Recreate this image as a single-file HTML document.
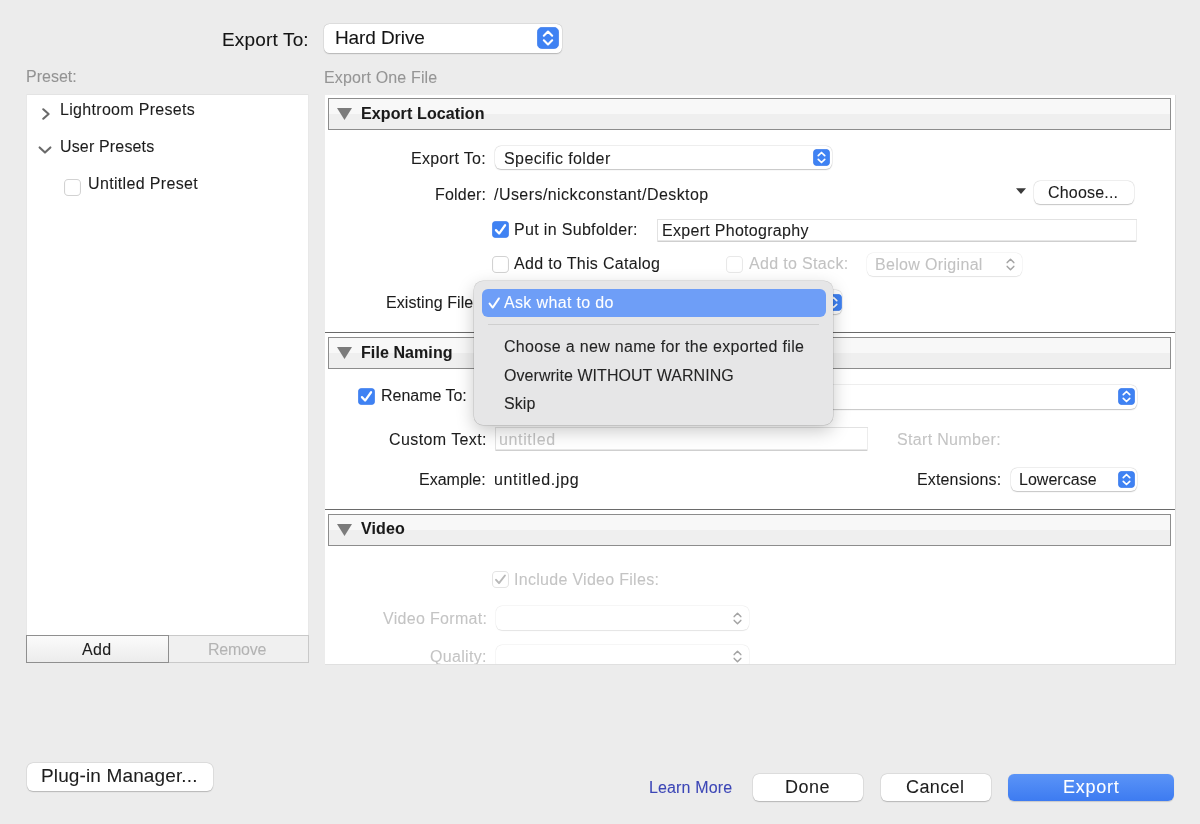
<!DOCTYPE html>
<html><head><meta charset="utf-8"><style>
html,body{margin:0;padding:0}
body{width:1200px;height:824px;background:#ececec;position:relative;overflow:hidden;font-family:"Liberation Sans",sans-serif}
.a,.t,.pop{position:absolute}
.t{white-space:pre;will-change:transform;-webkit-text-stroke:0.08px currentColor}
.pop{background:#fff;box-shadow:0 0 0 0.5px rgba(0,0,0,0.08),0 0.8px 1.2px rgba(0,0,0,0.20)}
.hdr{position:absolute;border:1px solid #8c8c8c;background:linear-gradient(#f8f8f8 0,#f8f8f8 50%,#efefef 50%,#efefef 100%)}
.tf{background:#fff;box-shadow:inset 1px 1px 0 #e2e2e2, inset -1px 0 0 #ececec, inset 0 -1.5px 0 #cfcfcf}
.menu{background:#e6e6e7;border-radius:9px;box-shadow:0 0 0 0.5px rgba(0,0,0,0.18),0 6px 18px rgba(0,0,0,0.22)}
</style></head><body>
<div class="t" style="left:222.25px;top:29.50px;font-size:19px;line-height:19px;color:#141414;letter-spacing:0.161px;">Export To:</div>
<div class="pop" style="left:323.5px;top:23.5px;width:238.5px;height:29.5px;border-radius:5.5px;"></div>
<div class="t" style="left:335.25px;top:27.70px;font-size:19px;line-height:19px;color:#141414;letter-spacing:-0.106px;">Hard Drive</div>
<svg class="a" style="left:537px;top:27px" width="22" height="22" viewBox="0 0 22 22"><rect x="0.25" y="0.25" width="21.5" height="21.5" rx="5" fill="#3f82f3" stroke="#3170e6" stroke-width="0.5"/><path d="M6.82 8.69 L11.00 4.51 L15.18 8.69 M6.82 13.31 L11.00 17.49 L15.18 13.31" stroke="#fff" stroke-width="2.09" fill="none" stroke-linecap="round" stroke-linejoin="round"/></svg>
<div class="t" style="left:25.85px;top:69.20px;font-size:16px;line-height:16px;color:#939393;letter-spacing:0.008px;">Preset:</div>
<div class="t" style="left:323.95px;top:69.50px;font-size:16px;line-height:16px;color:#959595;letter-spacing:0.146px;">Export One File</div>
<div class="a" style="left:27px;top:95px;width:281px;height:540px;background:#fff;box-shadow:0 -0.5px 0 0.5px #e3e3e3"></div>
<svg class="a" style="left:41px;top:108px" width="10" height="12" viewBox="0 0 10 12"><path d="M2.3 1.3 L7.6 6 L2.3 10.7" stroke="#6a6a6a" stroke-width="2.1" fill="none" stroke-linecap="round" stroke-linejoin="round"/></svg>
<svg class="a" style="left:38px;top:145px" width="14" height="10" viewBox="0 0 14 10"><path d="M1.6 2.4 L7 7.6 L12.4 2.4" stroke="#6a6a6a" stroke-width="2.1" fill="none" stroke-linecap="round" stroke-linejoin="round"/></svg>
<div class="t" style="left:60.00px;top:102.00px;font-size:16px;line-height:16px;color:#1c1c1c;letter-spacing:0.312px;">Lightroom Presets</div>
<div class="t" style="left:59.75px;top:139.00px;font-size:16px;line-height:16px;color:#1c1c1c;letter-spacing:0.159px;">User Presets</div>
<svg class="a" style="left:64px;top:179px" width="17" height="17" viewBox="0 0 16 16"><rect x="0.5" y="0.5" width="15" height="15" rx="3.5" fill="#fff" stroke="#d2d2d2" stroke-width="1"/></svg>
<div class="t" style="left:88.00px;top:176.00px;font-size:16px;line-height:16px;color:#1c1c1c;letter-spacing:0.339px;">Untitled Preset</div>
<div class="a btn2" style="left:26px;top:635px;width:141px;height:26px;border:1px solid #8f8f8f;background:linear-gradient(#fbfbfb,#ececec)"></div>
<div class="a btn2" style="left:169px;top:635px;width:139px;height:26px;border:1px solid #c9c9c9;border-left:none;background:#f0f0f0"></div>
<div class="t" style="left:82.25px;top:641.70px;font-size:16px;line-height:16px;color:#1c1c1c;letter-spacing:0.375px;">Add</div>
<div class="t" style="left:208.25px;top:641.70px;font-size:16px;line-height:16px;color:#b3b3b3;letter-spacing:-0.250px;">Remove</div>
<div class="a" style="left:325px;top:95px;width:850px;height:569px;background:#fff;box-shadow:0.5px 0.5px 0 0.5px #dcdcdc" id="rp"></div>
<div class="hdr" style="left:328px;top:98px;width:841px;height:30px;"></div>
<svg class="a" style="left:337px;top:108px" width="15" height="12" viewBox="0 0 15 12"><path d="M0 0 L15 0 L7.5 12 Z" fill="#7b7b7b"/></svg>
<div class="t" style="left:360.95px;top:106.20px;font-size:16px;line-height:16px;font-weight:bold;color:#1a1a1a;letter-spacing:0.125px;">Export Location</div>
<div class="t" style="left:411.25px;top:150.75px;font-size:16px;line-height:16px;color:#1c1c1c;letter-spacing:0.333px;">Export To:</div>
<div class="pop" style="left:495px;top:145.5px;width:337px;height:23.5px;border-radius:6px;"></div>
<div class="t" style="left:504.25px;top:150.75px;font-size:16px;line-height:16px;color:#1c1c1c;letter-spacing:0.411px;">Specific folder</div>
<svg class="a" style="left:812.5px;top:149px" width="17" height="17" viewBox="0 0 17 17"><rect x="0.25" y="0.25" width="16.5" height="16.5" rx="4" fill="#3f82f3" stroke="#3170e6" stroke-width="0.5"/><path d="M5.27 6.71 L8.50 3.48 L11.73 6.71 M5.27 10.29 L8.50 13.52 L11.73 10.29" stroke="#fff" stroke-width="1.70" fill="none" stroke-linecap="round" stroke-linejoin="round"/></svg>
<div class="t" style="left:434.75px;top:186.50px;font-size:16px;line-height:16px;color:#1c1c1c;letter-spacing:0.208px;">Folder:</div>
<div class="t" style="left:493.50px;top:186.50px;font-size:16px;line-height:16px;color:#1c1c1c;letter-spacing:0.442px;">/Users/nickconstant/Desktop</div>
<svg class="a" style="left:1015.5px;top:187.5px" width="10" height="6" viewBox="0 0 10 6"><path d="M0 0.2 L10 0.2 L5 6 Z" fill="#3a3a3a"/></svg>
<div class="pop" style="left:1034px;top:181px;width:100px;height:23px;border-radius:6px;"></div>
<div class="t" style="left:1048.00px;top:185.00px;font-size:16px;line-height:16px;color:#1c1c1c;letter-spacing:0.188px;">Choose...</div>
<svg class="a" style="left:491.5px;top:221px" width="17" height="17" viewBox="0 0 16 16"><rect x="0.2" y="0.2" width="15.6" height="15.6" rx="3.5" fill="#3f82f3" stroke="#3472e6" stroke-width="0.4"/><path d="M3.7 8.6 L6.7 11.8 L12.3 4.0" stroke="#fff" stroke-width="2.1" fill="none" stroke-linecap="round" stroke-linejoin="round"/></svg>
<div class="t" style="left:514.25px;top:222.00px;font-size:16px;line-height:16px;color:#1c1c1c;letter-spacing:0.328px;">Put in Subfolder:</div>
<div class="a tf" style="left:657px;top:219px;width:480px;height:23px"></div>
<div class="t" style="left:661.75px;top:222.50px;font-size:16px;line-height:16px;color:#1c1c1c;letter-spacing:0.294px;">Expert Photography</div>
<svg class="a" style="left:491.5px;top:255.5px" width="17" height="17" viewBox="0 0 16 16"><rect x="0.5" y="0.5" width="15" height="15" rx="3.5" fill="#fff" stroke="#d2d2d2" stroke-width="1"/></svg>
<div class="t" style="left:514.25px;top:255.75px;font-size:16px;line-height:16px;color:#1c1c1c;letter-spacing:0.319px;">Add to This Catalog</div>
<svg class="a" style="left:725.5px;top:255.5px" width="17" height="17" viewBox="0 0 16 16"><rect x="0.5" y="0.5" width="15" height="15" rx="3.5" fill="#fff" stroke="#e8e8e8" stroke-width="1"/></svg>
<div class="t" style="left:748.50px;top:255.75px;font-size:16px;line-height:16px;color:#c2c2c2;letter-spacing:0.333px;">Add to Stack:</div>
<div class="pop" style="left:867px;top:252.5px;width:155px;height:23.5px;border-radius:6px;box-shadow:0 0 0 0.5px rgba(0,0,0,0.06),0 0.5px 1px rgba(0,0,0,0.08)"></div>
<div class="t" style="left:875.25px;top:256.50px;font-size:16px;line-height:16px;color:#c2c2c2;letter-spacing:0.327px;">Below Original</div>
<svg class="a" style="left:1006px;top:258px" width="9" height="13" viewBox="0 0 9 13"><path d="M1.2 4.6 L4.5 1.2 L7.8 4.6 M1.2 8.4 L4.5 11.8 L7.8 8.4" stroke="#a4a4a4" stroke-width="1.5" fill="none" stroke-linecap="round" stroke-linejoin="round"/></svg>
<div class="t" style="left:385.50px;top:295.00px;font-size:16px;line-height:16px;color:#1c1c1c;letter-spacing:0.083px;">Existing File</div>
<div class="pop" style="left:495px;top:290px;width:347px;height:24px;border-radius:6px;"></div>
<svg class="a" style="left:825px;top:294px" width="17" height="17" viewBox="0 0 17 17"><rect x="0.25" y="0.25" width="16.5" height="16.5" rx="4" fill="#3f82f3" stroke="#3170e6" stroke-width="0.5"/><path d="M5.27 6.71 L8.50 3.48 L11.73 6.71 M5.27 10.29 L8.50 13.52 L11.73 10.29" stroke="#fff" stroke-width="1.70" fill="none" stroke-linecap="round" stroke-linejoin="round"/></svg>
<div class="a" style="left:325px;top:332px;width:850px;height:1px;background:#6a6a6a"></div>
<div class="hdr" style="left:328px;top:337px;width:841px;height:30px;"></div>
<svg class="a" style="left:337px;top:347px" width="15" height="12" viewBox="0 0 15 12"><path d="M0 0 L15 0 L7.5 12 Z" fill="#7b7b7b"/></svg>
<div class="t" style="left:360.85px;top:344.70px;font-size:16px;line-height:16px;font-weight:bold;color:#1a1a1a;letter-spacing:0.085px;">File Naming</div>
<svg class="a" style="left:358px;top:387.5px" width="17" height="17" viewBox="0 0 16 16"><rect x="0.2" y="0.2" width="15.6" height="15.6" rx="3.5" fill="#3f82f3" stroke="#3472e6" stroke-width="0.4"/><path d="M3.7 8.6 L6.7 11.8 L12.3 4.0" stroke="#fff" stroke-width="2.1" fill="none" stroke-linecap="round" stroke-linejoin="round"/></svg>
<div class="t" style="left:380.50px;top:388.25px;font-size:16px;line-height:16px;color:#1c1c1c;letter-spacing:-0.028px;">Rename To:</div>
<div class="pop" style="left:495px;top:384.5px;width:642px;height:24px;border-radius:6px;"></div>
<svg class="a" style="left:1118px;top:388px" width="17" height="17" viewBox="0 0 17 17"><rect x="0.25" y="0.25" width="16.5" height="16.5" rx="4" fill="#3f82f3" stroke="#3170e6" stroke-width="0.5"/><path d="M5.27 6.71 L8.50 3.48 L11.73 6.71 M5.27 10.29 L8.50 13.52 L11.73 10.29" stroke="#fff" stroke-width="1.70" fill="none" stroke-linecap="round" stroke-linejoin="round"/></svg>
<div class="t" style="left:388.75px;top:431.50px;font-size:16px;line-height:16px;color:#1c1c1c;letter-spacing:0.409px;">Custom Text:</div>
<div class="a tf" style="left:495px;top:427px;width:373px;height:24px"></div>
<div class="t" style="left:499.25px;top:431.50px;font-size:16px;line-height:16px;color:#c4c4c4;letter-spacing:0.643px;">untitled</div>
<div class="t" style="left:897.25px;top:431.50px;font-size:16px;line-height:16px;color:#c4c4c4;letter-spacing:0.333px;">Start Number:</div>
<div class="t" style="left:419.25px;top:471.50px;font-size:16px;line-height:16px;color:#1c1c1c;letter-spacing:0.000px;">Example:</div>
<div class="t" style="left:493.75px;top:471.50px;font-size:16px;line-height:16px;color:#1c1c1c;letter-spacing:0.659px;">untitled.jpg</div>
<div class="t" style="left:916.75px;top:471.50px;font-size:16px;line-height:16px;color:#1c1c1c;letter-spacing:0.150px;">Extensions:</div>
<div class="pop" style="left:1011px;top:467.5px;width:126px;height:23px;border-radius:6px;"></div>
<div class="t" style="left:1019.25px;top:471.50px;font-size:16px;line-height:16px;color:#1c1c1c;letter-spacing:0.031px;">Lowercase</div>
<svg class="a" style="left:1118px;top:471px" width="17" height="17" viewBox="0 0 17 17"><rect x="0.25" y="0.25" width="16.5" height="16.5" rx="4" fill="#3f82f3" stroke="#3170e6" stroke-width="0.5"/><path d="M5.27 6.71 L8.50 3.48 L11.73 6.71 M5.27 10.29 L8.50 13.52 L11.73 10.29" stroke="#fff" stroke-width="1.70" fill="none" stroke-linecap="round" stroke-linejoin="round"/></svg>
<div class="a" style="left:325px;top:508.5px;width:850px;height:1px;background:#6a6a6a"></div>
<div class="hdr" style="left:328px;top:513.5px;width:841px;height:30px;"></div>
<svg class="a" style="left:337px;top:523.5px" width="15" height="12" viewBox="0 0 15 12"><path d="M0 0 L15 0 L7.5 12 Z" fill="#7b7b7b"/></svg>
<div class="t" style="left:360.50px;top:521.25px;font-size:16px;line-height:16px;font-weight:bold;color:#1a1a1a;letter-spacing:0.125px;">Video</div>
<svg class="a" style="left:491.5px;top:571px" width="17" height="17" viewBox="0 0 16 16"><rect x="0.5" y="0.5" width="15" height="15" rx="3.5" fill="#fff" stroke="#e4e4e4" stroke-width="1"/><path d="M3.8 8.3 L6.6 11.4 L12.2 4.2" stroke="#b8b8b8" stroke-width="1.8" fill="none" stroke-linecap="round" stroke-linejoin="round"/></svg>
<div class="t" style="left:513.75px;top:572.00px;font-size:16px;line-height:16px;color:#c4c4c4;letter-spacing:0.292px;">Include Video Files:</div>
<div class="t" style="left:382.50px;top:610.75px;font-size:16px;line-height:16px;color:#c4c4c4;letter-spacing:0.312px;">Video Format:</div>
<div class="pop" style="left:495.5px;top:606px;width:253.5px;height:24px;border-radius:6px;box-shadow:0 0 0 0.5px rgba(0,0,0,0.06),0 0.5px 1px rgba(0,0,0,0.08)"></div>
<svg class="a" style="left:733px;top:612px" width="9" height="13" viewBox="0 0 9 13"><path d="M1.2 4.6 L4.5 1.2 L7.8 4.6 M1.2 8.4 L4.5 11.8 L7.8 8.4" stroke="#a4a4a4" stroke-width="1.5" fill="none" stroke-linecap="round" stroke-linejoin="round"/></svg>
<div class="t" style="left:430.00px;top:648.50px;font-size:16px;line-height:16px;color:#c4c4c4;letter-spacing:0.321px;">Quality:</div>
<div class="pop" style="left:495.5px;top:644.5px;width:253.5px;height:24px;border-radius:6px;box-shadow:0 0 0 0.5px rgba(0,0,0,0.06),0 0.5px 1px rgba(0,0,0,0.08)"></div>
<svg class="a" style="left:733px;top:650px" width="9" height="13" viewBox="0 0 9 13"><path d="M1.2 4.6 L4.5 1.2 L7.8 4.6 M1.2 8.4 L4.5 11.8 L7.8 8.4" stroke="#a4a4a4" stroke-width="1.5" fill="none" stroke-linecap="round" stroke-linejoin="round"/></svg>
<div class="a" style="left:320px;top:664px;width:880px;height:20px;background:#ececec"></div>
<div class="a" style="left:325px;top:664px;width:851px;height:1px;background:#e0e0e0"></div>
<div class="a menu" style="left:474px;top:280.5px;width:359px;height:144px;"></div>
<div class="a" style="left:482px;top:289px;width:344px;height:27.5px;border-radius:6px;background:#6e9ef7"></div>
<svg class="a" style="left:488px;top:297px" width="12" height="12" viewBox="0 0 12 12"><path d="M1.6 6.6 L4.7 10.6 L10.9 1.4" stroke="#fff" stroke-width="1.9" fill="none" stroke-linecap="round" stroke-linejoin="round"/></svg>
<div class="t" style="left:504.25px;top:295.25px;font-size:16px;line-height:16px;color:#fff;letter-spacing:0.346px;">Ask what to do</div>
<div class="a" style="left:488px;top:324px;width:331px;height:1px;background:#cfcfcf"></div>
<div class="t" style="left:504.25px;top:339.00px;font-size:16px;line-height:16px;color:#242424;letter-spacing:0.309px;">Choose a new name for the exported file</div>
<div class="t" style="left:504.25px;top:367.50px;font-size:16px;line-height:16px;color:#242424;letter-spacing:0.052px;">Overwrite WITHOUT WARNING</div>
<div class="t" style="left:504.25px;top:395.75px;font-size:16px;line-height:16px;color:#242424;letter-spacing:0.083px;">Skip</div>
<div class="pop" style="left:27px;top:763px;width:186px;height:27.5px;border-radius:6px;"></div>
<div class="t" style="left:41.25px;top:766.00px;font-size:19px;line-height:19px;color:#1e1e1e;letter-spacing:0.132px;">Plug-in Manager...</div>
<div class="t" style="left:649.00px;top:779.75px;font-size:16px;line-height:16px;color:#3c46b6;letter-spacing:0.139px;">Learn More</div>
<div class="pop" style="left:753px;top:774px;width:110px;height:27px;border-radius:6px;"></div>
<div class="t" style="left:785.45px;top:778.00px;font-size:18px;line-height:18px;color:#1e1e1e;letter-spacing:0.517px;">Done</div>
<div class="pop" style="left:881px;top:774px;width:110px;height:27px;border-radius:6px;"></div>
<div class="t" style="left:906.25px;top:778.00px;font-size:18px;line-height:18px;color:#1e1e1e;letter-spacing:0.390px;">Cancel</div>
<div class="a" style="left:1008px;top:774px;width:166px;height:27px;border-radius:6px;background:linear-gradient(#5b94f7,#3d7bf1);box-shadow:0 0.5px 1px rgba(0,0,0,0.15)"></div>
<div class="t" style="left:1062.95px;top:778.00px;font-size:18px;line-height:18px;color:#fff;letter-spacing:0.750px;">Export</div>
</body></html>
